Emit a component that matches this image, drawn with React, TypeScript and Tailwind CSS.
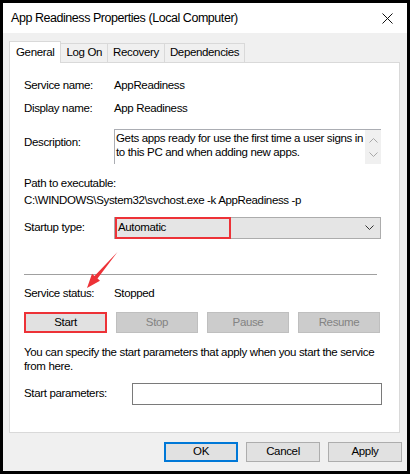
import React from 'react'

const font = { fontFamily: '"Segoe UI", "Liberation Sans", Arial, sans-serif' }

function Chevron({ up, className }: { up?: boolean; className?: string }) {
  return (
    <svg width="9" height="6" viewBox="0 0 9 6" className={className}>
      <path d={up ? 'M0.5 5.5 L4.5 1.5 L8.5 5.5' : 'M0.5 0.5 L4.5 4.5 L8.5 0.5'} fill="none" stroke="currentColor" strokeWidth="1" />
    </svg>
  )
}

function Btn({ label, disabled, className = '' }: { label: string; disabled?: boolean; className?: string }) {
  return (
    <div
      className={`h-[21px] w-[82px] flex items-center justify-center border ${
        disabled ? 'bg-[#cccccc] border-[#bfbfbf] text-[#838383]' : 'bg-[#e1e1e1] border-[#adadad] text-black'
      } ${className}`}
    >
      {label}
    </div>
  )
}

function Tab({ label, active }: { label: string; active?: boolean }) {
  return active ? (
    <div className="h-[22px] px-[6px] flex items-center bg-white border border-b-0 border-[#d9d9d9] relative z-10 -mb-px">
      {label}
    </div>
  ) : (
    <div className="h-[19px] px-[5px] flex items-center bg-[#f0f0f0] border border-l-0 border-b-0 border-[#d9d9d9] mt-[2px]">
      {label}
    </div>
  )
}

export default function App() {
  return (
    <div className="w-[410px] h-[474px] bg-black p-[3px] relative text-black text-[11.5px] tracking-[-0.35px]" style={font}>
      <div className="w-full h-full bg-[#f0f0f0] flex flex-col">
        {/* title bar */}
        <div className="h-[30px] bg-white flex items-center justify-between pl-[8px] pr-[14px]">
          <span className="text-[12.5px] tracking-[-0.45px]">App Readiness Properties (Local Computer)</span>
          <svg width="11" height="11" viewBox="0 0 11 11">
            <path d="M0.5 0.5 L10.5 10.5 M10.5 0.5 L0.5 10.5" stroke="#111" strokeWidth="1" />
          </svg>
        </div>

        <div className="pl-[6px] pr-[7px] pt-[8px]">
          <div className="flex items-end">
            <Tab label="General" active />
            <Tab label="Log On" />
            <Tab label="Recovery" />
            <Tab label="Dependencies" />
          </div>

          <div className="h-[371px] bg-white border border-[#d9d9d9] pl-[14px] pr-[18px]">
            <div className="flex items-center h-[16px] mt-[15px]">
              <span className="w-[90px]">Service name:</span>
              <span>AppReadiness</span>
            </div>
            <div className="flex items-center h-[16px] mt-[7px]">
              <span className="w-[90px]">Display name:</span>
              <span>App Readiness</span>
            </div>
            <div className="flex items-start mt-[12px]">
              <span className="w-[90px] mt-[5px] leading-[16px]">Description:</span>
              <div className="flex-1 h-[35px] border-t border-l border-[#abadb3] flex">
                <div className="flex-1 leading-[14px] pt-[1px] pl-[1px] whitespace-nowrap overflow-hidden">
                  Gets apps ready for use the first time a user signs in
                  <br />
                  to this PC and when adding new apps.
                </div>
                <div className="w-[16px] bg-[#f0f0f0] flex flex-col items-center justify-around text-[#a8a8a8] py-[2px]">
                  <Chevron up />
                  <Chevron />
                </div>
              </div>
            </div>
            <div className="leading-[16px] mt-[11px]">Path to executable:</div>
            <div className="leading-[16px] mt-[1px]">C:\WINDOWS\System32\svchost.exe -k AppReadiness -p</div>
            <div className="flex items-center mt-[9px]">
              <span className="w-[90px]">Startup type:</span>
              <div className="flex-1 h-[22px] bg-[#e5e5e5] border border-[#acacac] flex items-center justify-between pr-[6px] relative">
                <div className="absolute left-0 top-[-1px] w-[116px] h-[22px] border-2 border-[#ed3237]" />
                <span className="pl-[3px]">Automatic</span>
                <Chevron className="text-[#333]" />
              </div>
            </div>
            <div className="w-[353px] h-px bg-[#a0a0a0] mt-[35px]" />
            <div className="flex items-center h-[16px] mt-[11px]">
              <span className="w-[90px]">Service status:</span>
              <span>Stopped</span>
            </div>
            <div className="flex mt-[10px] gap-[9px]">
              <div className="w-[83px] h-[21px] border-2 border-[#ed3237] flex">
                <div className="flex-1 bg-[#e1e1e1] flex items-center justify-center">Start</div>
              </div>
              <Btn label="Stop" disabled />
              <Btn label="Pause" disabled />
              <Btn label="Resume" disabled />
            </div>
            <div className="leading-[14px] mt-[12px] whitespace-nowrap">
              You can specify the start parameters that apply when you start the service
              <br />
              from here.
            </div>
            <div className="flex items-center mt-[10px]">
              <span className="w-[108px]">Start parameters:</span>
              <div className="flex-1 h-[22px] border border-[#7a7a7a] bg-white mr-[-1px]" />
            </div>
          </div>

          <div className="flex justify-end gap-[8px] mt-[9px] mr-[-2px]">
            <div className="w-[74px] h-[20px] bg-[#e1e1e1] border-2 border-[#0078d7] flex items-center justify-center">OK</div>
            <div className="w-[74px] h-[20px] bg-[#e1e1e1] border border-[#adadad] flex items-center justify-center">Cancel</div>
            <div className="w-[74px] h-[20px] bg-[#e1e1e1] border border-[#adadad] flex items-center justify-center">Apply</div>
          </div>
        </div>
      </div>

      <svg className="absolute left-[80px] top-[245px]" width="45" height="50" viewBox="0 0 45 50">
        <polygon points="37.5,7 17.5,33.5 20,35.8 7,43 12,28.8 14.5,31" fill="#ed3237" />
      </svg>
    </div>
  )
}
